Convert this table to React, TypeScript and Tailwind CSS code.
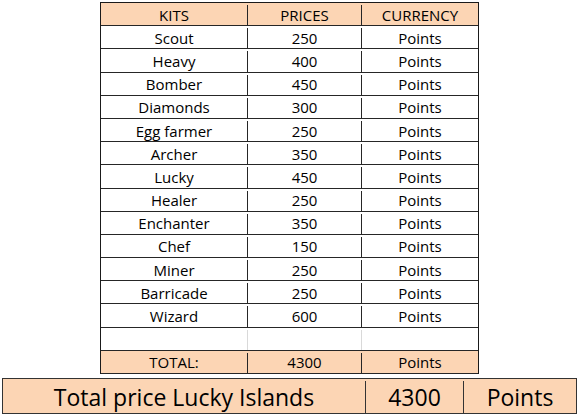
import React from "react";

const rows: [string, string][] = [
  ["Scout", "250"],
  ["Heavy", "400"],
  ["Bomber", "450"],
  ["Diamonds", "300"],
  ["Egg farmer", "250"],
  ["Archer", "350"],
  ["Lucky", "450"],
  ["Healer", "250"],
  ["Enchanter", "350"],
  ["Chef", "150"],
  ["Miner", "250"],
  ["Barricade", "250"],
  ["Wizard", "600"],
];

function Row({ a, b, c, peach, light }: { a: string; b: string; c: string; peach?: boolean; light?: boolean }) {
  const bg = peach ? "bg-[#fcd5b4]" : "bg-white";
  const line = light ? "border-[#d9d9d9]" : "border-[#262626]";
  return (
    <div className={`flex h-[23.2px] items-center border-b border-[#262626] pt-[2px] ${bg}`}>
      <div className={`flex h-full w-[147px] items-center justify-center border-r ${line}`}>{a}</div>
      <div className={`flex h-full w-[114px] items-center justify-center border-r ${line}`}>{b}</div>
      <div className="flex h-full flex-1 items-center justify-center">{c}</div>
    </div>
  );
}

export default function App() {
  return (
    <div className="h-[419px] w-[579px] bg-white pt-[2px] text-black" style={{ fontFamily: '"Open Sans", "Liberation Sans", sans-serif' }}>
      <div className="ml-[100px] w-[379px] border-x border-t border-[#1a1a1a] text-[15px] leading-none">
        <Row a="KITS" b="PRICES" c="CURRENCY" peach />
        {rows.map(([k, p]) => (
          <Row key={k} a={k} b={p} c="Points" />
        ))}
        <Row a="" b="" c="" light />
        <Row a="TOTAL:" b="4300" c="Points" peach />
      </div>
      <div className="ml-[2px] mt-[4px] flex h-[36px] w-[575px] items-center border border-[#333] bg-[#fcd5b4] pt-[2px] text-[23px] leading-none">
        <div className="flex h-full w-[363px] items-center justify-center border-r border-[#333]">Total price Lucky Islands</div>
        <div className="flex h-full w-[98px] items-center justify-center border-r border-[#333]">4300</div>
        <div className="flex h-full flex-1 items-center justify-center">Points</div>
      </div>
    </div>
  );
}
